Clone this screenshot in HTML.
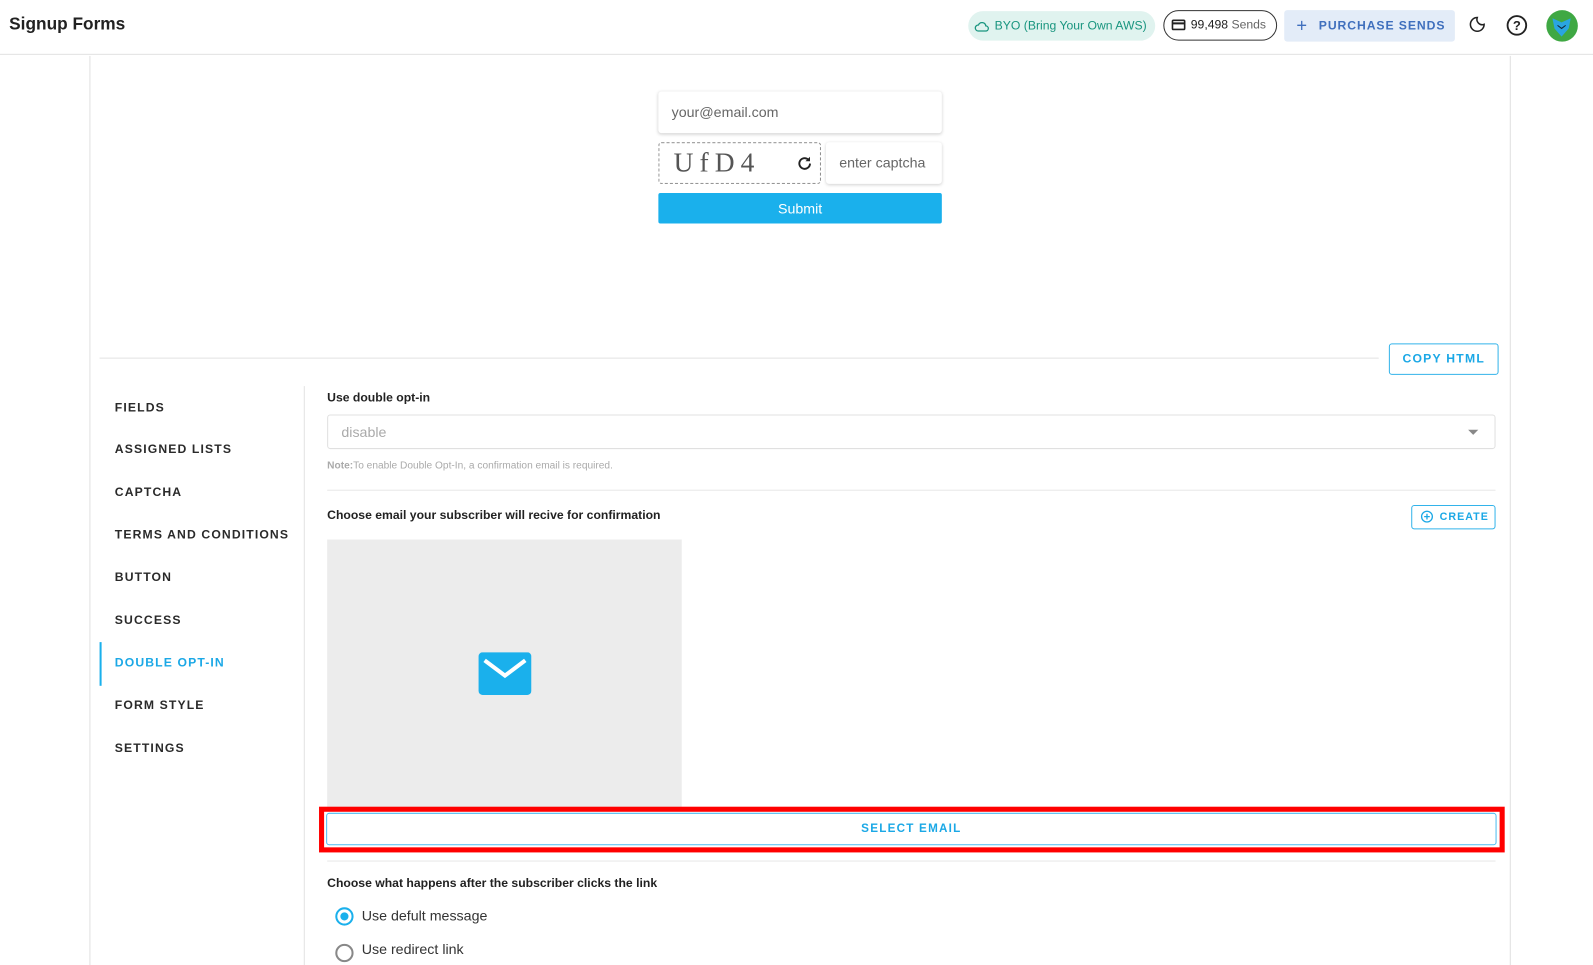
<!DOCTYPE html>
<html><head><style>
*{box-sizing:border-box;margin:0;padding:0}
body{width:1593px;height:950px;overflow:hidden;background:#fff;font-family:"Liberation Sans",Arial,sans-serif;color:#222;position:relative}
#w{position:absolute;left:0;top:0;width:1568px;height:936px;transform:scale(1.016);transform-origin:0 0}
.a{position:absolute}
.nav{position:absolute;left:113px;font-size:12px;font-weight:bold;letter-spacing:1.1px;color:#2a2a2a}
</style></head><body><div id="w">
<div class="a" style="left:0;top:0;width:1568px;height:54px;border-bottom:1px solid #e2e2e2"></div>
<div class="a" style="left:9px;top:14px;font-size:17px;font-weight:bold;color:#222">Signup Forms</div>
<div class="a" style="left:953px;top:11px;width:184px;height:29px;border-radius:15px;background:#e0f3ef;color:#19957f;font-size:12px;line-height:29px;padding-left:26px">BYO (Bring Your Own AWS)
<svg class="a" style="left:6px;top:8px" width="15" height="13" viewBox="0 0 24 20"><path d="M6 18h12a4 4 0 0 0 0-8 6 6 0 0 0-11.5-1.5A4.7 4.7 0 0 0 6 18z" fill="none" stroke="#19957f" stroke-width="2"/></svg></div>
<div class="a" style="left:1145px;top:10px;width:112px;height:30px;border-radius:15px;border:1.5px solid #333;font-size:12px;line-height:27px;padding-left:26px;color:#222">99,498 <span style="color:#666">Sends</span>
<svg class="a" style="left:7px;top:8px" width="14" height="11" viewBox="0 0 14 11"><rect x="1" y="1" width="12" height="9" rx="1" fill="none" stroke="#222" stroke-width="1.6"/><rect x="1" y="3" width="12" height="2" fill="#222"/></svg></div>
<div class="a" style="left:1264px;top:10px;width:168px;height:31px;background:#e3ecf8;border-radius:3px;color:#3f6fbd;font-size:12px;font-weight:bold;letter-spacing:0.9px;line-height:31px;padding-left:34px">PURCHASE SENDS
<span class="a" style="left:12px;top:0;font-size:18px;font-weight:normal">+</span></div>
<svg class="a" style="left:1445px;top:15px" width="18" height="18" viewBox="0 0 24 24"><path d="M12 3a9 9 0 1 0 9 9 7 7 0 0 1-9-9z" fill="none" stroke="#222" stroke-width="2"/></svg>
<svg class="a" style="left:1482px;top:14px" width="22" height="22" viewBox="0 0 24 24"><circle cx="12" cy="12" r="10" fill="none" stroke="#222" stroke-width="2"/><text x="12" y="17" font-size="14" text-anchor="middle" font-family="Liberation Sans" font-weight="bold" fill="#222">?</text></svg>
<div class="a" style="left:1522px;top:10px;width:31px;height:31px;border-radius:50%;background:#3fa843;overflow:hidden"><svg width="31" height="31" viewBox="0 0 31 31"><path d="M6 8l9 4 9-4-2 10-7 8-7-8z" fill="#2aa5e0"/><path d="M11 15l4 3 4-3" stroke="#123" fill="none"/></svg></div>

<div class="a" style="left:88px;top:55px;width:1px;height:895px;background:#e0e0e0"></div>
<div class="a" style="left:1486px;top:55px;width:1px;height:895px;background:#e0e0e0"></div>

<div class="a" style="left:648px;top:90px;width:279px;height:41px;border-radius:3px;box-shadow:0 1px 3px rgba(0,0,0,.18);font-size:14px;color:#666;padding:12px 13px">your@email.com</div>
<div class="a" style="left:648px;top:140px;width:160px;height:41px;border:1px dashed #888;border-radius:3px"><span class="a" style="left:14px;top:4px;font-family:'Liberation Serif',serif;font-size:27px;color:#555;letter-spacing:6px">UfD4</span>
<svg class="a" style="left:134px;top:11px" width="18" height="18" viewBox="0 0 24 24"><path d="M19 12a7 7 0 1 1-2-5" fill="none" stroke="#222" stroke-width="2.5"/><path d="M19 3v6h-6z" fill="#222"/></svg></div>
<div class="a" style="left:813px;top:140px;width:114px;height:41px;border-radius:3px;box-shadow:0 1px 3px rgba(0,0,0,.18);font-size:14px;color:#666;padding:12px 13px">enter captcha</div>
<div class="a" style="left:648px;top:190px;width:279px;height:30px;background:#1ab0ec;border-radius:2px;color:#fff;font-size:14px;text-align:center;line-height:30px">Submit</div>

<div class="a" style="left:98px;top:352px;width:1259px;height:1px;background:#e3e3e3"></div>
<div class="a" style="left:1367px;top:338px;width:108px;height:31px;border:1px solid #33b3ea;border-radius:3px;color:#1ba8e6;font-size:12px;font-weight:bold;letter-spacing:1.2px;text-align:center;line-height:29px">COPY HTML</div>

<div class="a" style="left:299px;top:380px;width:1px;height:570px;background:#e3e3e3"></div>
<div class="nav" style="top:394px">FIELDS</div>
<div class="nav" style="top:435px">ASSIGNED LISTS</div>
<div class="nav" style="top:477px">CAPTCHA</div>
<div class="nav" style="top:519px">TERMS AND CONDITIONS</div>
<div class="nav" style="top:561px">BUTTON</div>
<div class="nav" style="top:603px">SUCCESS</div>
<div class="a" style="left:98px;top:632px;width:2px;height:43px;background:#1ab0ec"></div>
<div class="nav" style="top:645px;color:#1ba8e6">DOUBLE OPT-IN</div>
<div class="nav" style="top:687px">FORM STYLE</div>
<div class="nav" style="top:729px">SETTINGS</div>

<div class="a" style="left:322px;top:384px;font-size:12px;font-weight:bold">Use double opt-in</div>
<div class="a" style="left:322px;top:408px;width:1150px;height:34px;border:1px solid #e0e0e0;border-radius:3px;font-size:14px;color:#aaa;padding:8px 13px">disable<span class="a" style="right:16px;top:14px;border:5px solid transparent;border-top:5px solid #888;border-bottom:0"></span></div>
<div class="a" style="left:322px;top:453px;font-size:10px;color:#aaa"><b>Note:</b>To enable Double Opt-In, a confirmation email is required.</div>
<div class="a" style="left:322px;top:482px;width:1150px;height:1px;background:#e8e8e8"></div>
<div class="a" style="left:322px;top:500px;font-size:12px;font-weight:bold">Choose email your subscriber will recive for confirmation</div>
<div class="a" style="left:1389px;top:497px;width:83px;height:24px;border:1px solid #33b3ea;border-radius:3px;color:#1ba8e6;font-size:10.5px;font-weight:bold;letter-spacing:1px;line-height:22px;padding-left:27px">CREATE
<svg class="a" style="left:8px;top:4px" width="13" height="13" viewBox="0 0 14 14"><circle cx="7" cy="7" r="5.7" fill="none" stroke="#1ba8e6" stroke-width="1.4"/><path d="M7 4v6M4 7h6" stroke="#1ba8e6" stroke-width="1.4"/></svg></div>
<div class="a" style="left:322px;top:531px;width:349px;height:264px;background:#ececec"></div>
<svg class="a" style="left:471px;top:642px" width="52" height="42" viewBox="0 0 52 42"><rect width="52" height="42" rx="4" fill="#1ab0ec"/><path d="M6 8l20 15 20-15" fill="none" stroke="#fff" stroke-width="4"/></svg>
<div class="a" style="left:314px;top:794px;width:1167px;height:45px;border:5px solid #f00"></div>
<div class="a" style="left:321px;top:800px;width:1152px;height:32px;border:1px solid #4dbcf0;border-radius:3px;color:#1ba8e6;font-size:11.5px;font-weight:bold;letter-spacing:1.2px;text-align:center;line-height:30px">SELECT EMAIL</div>
<div class="a" style="left:322px;top:847px;width:1150px;height:1px;background:#e8e8e8"></div>
<div class="a" style="left:322px;top:862px;font-size:12px;font-weight:bold">Choose what happens after the subscriber clicks the link</div>
<div class="a" style="left:330px;top:893px;width:18px;height:18px;border:2px solid #1ab0ec;border-radius:50%"><div class="a" style="left:3px;top:3px;width:8px;height:8px;border-radius:50%;background:#1ab0ec"></div></div>
<div class="a" style="left:356px;top:893px;font-size:14px;color:#333">Use defult message</div>
<div class="a" style="left:330px;top:929px;width:18px;height:18px;border:2px solid #888;border-radius:50%"></div>
<div class="a" style="left:356px;top:926px;font-size:14px;color:#333">Use redirect link</div>
</div></body></html>
